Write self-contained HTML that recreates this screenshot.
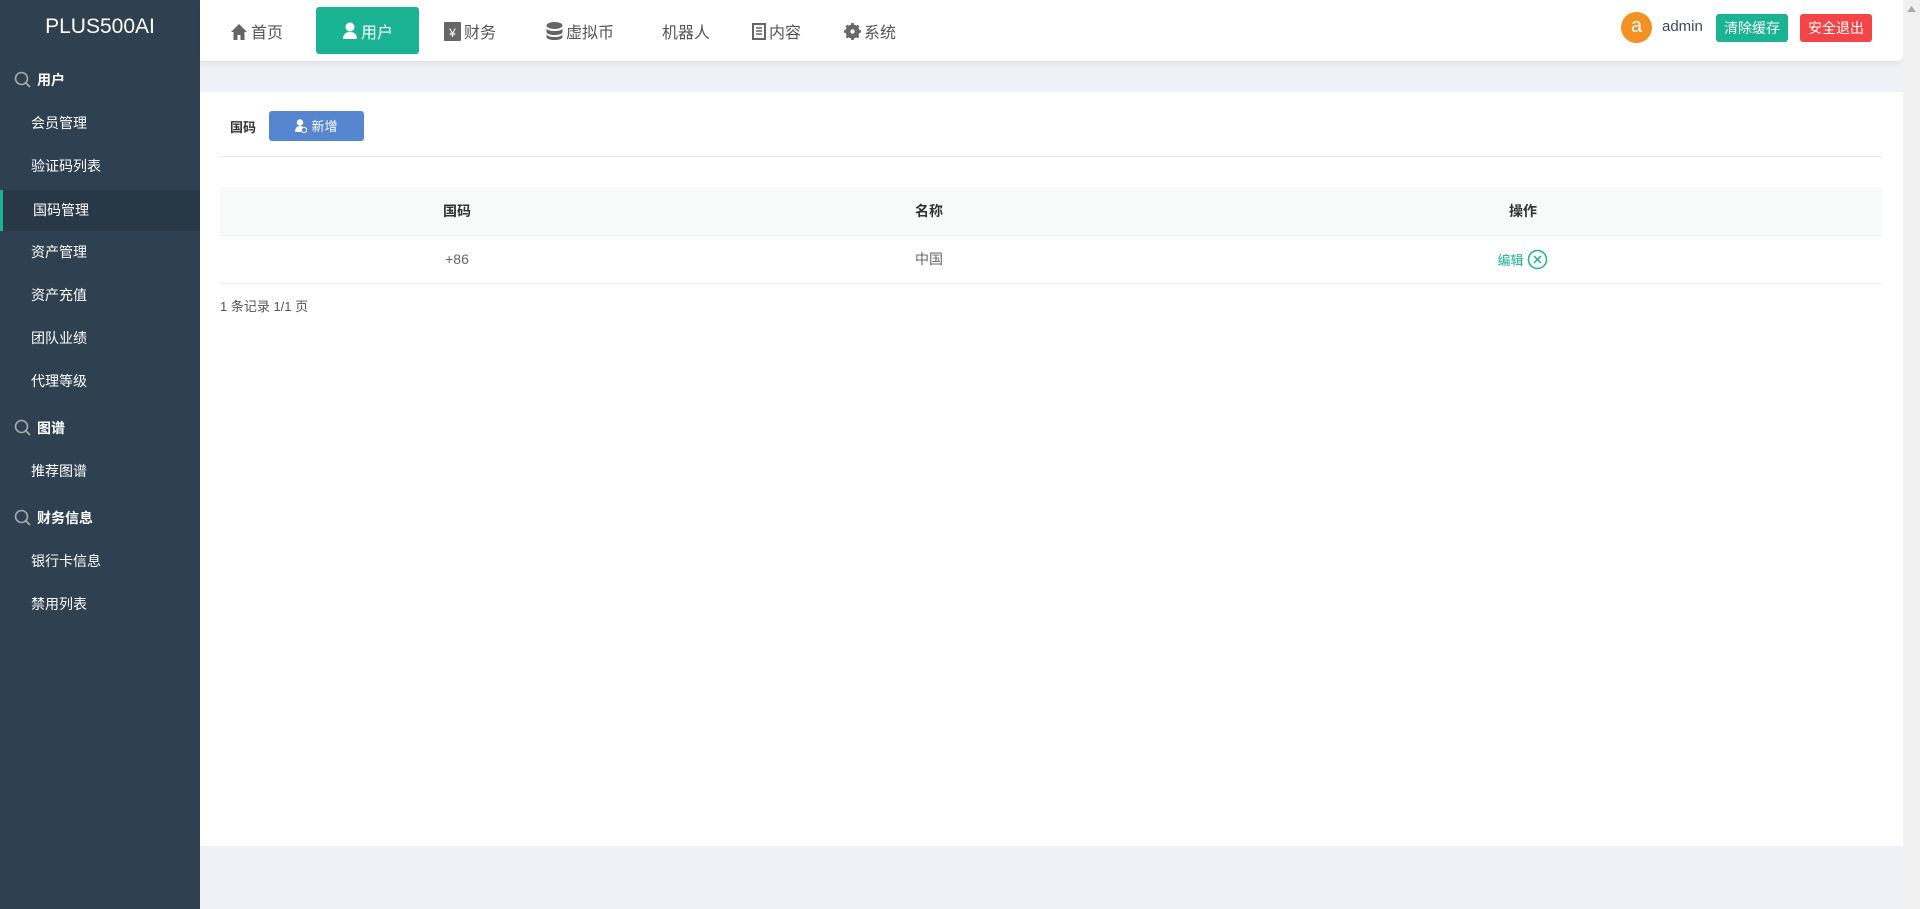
<!DOCTYPE html>
<html><head><meta charset="utf-8"><style>
*{margin:0;padding:0;box-sizing:border-box}
body{width:1920px;height:909px;overflow:hidden;background:#f0f1f6;font-family:"Liberation Sans","Noto Sans CJK SC",sans-serif;position:relative;color:#333}
.side{position:absolute;left:0;top:0;width:200px;height:909px;background:#2f4050}
.logo{position:absolute;top:15px;width:200px;text-align:center;color:#fff;font-size:21px}
.sec{position:absolute;left:14px;color:#fff;font-weight:bold;font-size:14px;display:flex;align-items:center;gap:5px}
.it{position:absolute;left:0;width:200px;height:41px;line-height:41px;padding-left:31px;color:#fff;font-size:14px}
.it.act{background:#293846;border-left:3px solid #1ab394;padding-left:30px}
.top{position:absolute;left:200px;top:0;width:1703px;height:61px;background:#fff;box-shadow:0 2px 6px rgba(0,0,0,.08);border-radius:0 0 6px 0}
.nav{position:absolute;top:19px;font-size:16px;color:#555;display:flex;align-items:center;gap:3px}
.navact{position:absolute;left:116px;top:7px;width:103px;height:47px;background:#1ab394;border-radius:3px;color:#fff;font-size:16px;display:flex;align-items:center;justify-content:center;gap:3px}
.btn{position:absolute;top:14px;height:28px;line-height:28px;color:#fff;font-size:14px;text-align:center;border-radius:3px}
.panel{position:absolute;left:200px;top:92px;width:1703px;height:754px;background:#fff}
.scroll{position:absolute;right:0;top:0;width:17px;height:909px;background:#f0f0f0}
table{position:absolute;left:20px;top:95px;width:1662px;border-collapse:collapse;font-size:14px;table-layout:fixed}
th{height:48px;background:#f8f9f9;font-weight:bold;border-bottom:1px solid #eee;color:#333}
td{height:48px;text-align:center;border-bottom:1px solid #eee;color:#666}
</style></head><body>
<div class="side">
<div class="logo">PLUS500AI</div>
<div class="sec" style="top:70px"><svg width="18" height="18" viewBox="0 0 18 18"><circle cx="7.5" cy="7.5" r="6" fill="none" stroke="#aaa" stroke-width="1.6"/><path d="M12 12l4 4" stroke="#aaa" stroke-width="1.8"/></svg>用户</div>
<div class="it" style="top:103px">会员管理</div>
<div class="it" style="top:146px">验证码列表</div>
<div class="it act" style="top:190px">国码管理</div>
<div class="it" style="top:232px">资产管理</div>
<div class="it" style="top:275px">资产充值</div>
<div class="it" style="top:318px">团队业绩</div>
<div class="it" style="top:361px">代理等级</div>
<div class="sec" style="top:418px"><svg width="18" height="18" viewBox="0 0 18 18"><circle cx="7.5" cy="7.5" r="6" fill="none" stroke="#aaa" stroke-width="1.6"/><path d="M12 12l4 4" stroke="#aaa" stroke-width="1.8"/></svg>图谱</div>
<div class="it" style="top:451px">推荐图谱</div>
<div class="sec" style="top:508px"><svg width="18" height="18" viewBox="0 0 18 18"><circle cx="7.5" cy="7.5" r="6" fill="none" stroke="#aaa" stroke-width="1.6"/><path d="M12 12l4 4" stroke="#aaa" stroke-width="1.8"/></svg>财务信息</div>
<div class="it" style="top:541px">银行卡信息</div>
<div class="it" style="top:584px">禁用列表</div>
</div>
<div class="top">
<div class="nav" style="left:30px"><svg width="18" height="17" viewBox="0 0 18 17"><path d="M9 1L1 9h2.5v8h4v-5h3v5h4V9H17z" fill="#666"/></svg>首页</div>
<div class="navact"><svg width="16" height="17" viewBox="0 0 16 17"><circle cx="8" cy="5" r="4.5" fill="#fff"/><path d="M1 17c0-5 3-7 7-7s7 2 7 7z" fill="#fff"/></svg>用户</div>
<div class="nav" style="left:244px"><svg width="17" height="19" viewBox="0 0 17 19"><rect x="0" y="0" width="17" height="19" rx="1" fill="#666"/><text x="8.5" y="15" font-size="12" fill="#fff" text-anchor="middle" font-family="Liberation Sans">¥</text></svg>财务</div>
<div class="nav" style="left:346px"><svg width="17" height="19" viewBox="0 0 17 19"><ellipse cx="8.5" cy="3.5" rx="8" ry="3.5" fill="#666"/><path d="M.5 6c0 4 16 4 16 0v4c0 4-16 4-16 0zM.5 12c0 4 16 4 16 0v3c0 4-16 4-16 0z" fill="#666"/></svg>虚拟币</div>
<div class="nav" style="left:462px">机器人</div>
<div class="nav" style="left:552px"><svg width="14" height="17" viewBox="0 0 14 17"><rect x="1" y="1" width="12" height="15" fill="none" stroke="#666" stroke-width="2"/><path d="M4 5h6M4 8h6M4 11h6" stroke="#666" stroke-width="1.5"/></svg>内容</div>
<div class="nav" style="left:644px"><svg width="17" height="17" viewBox="0 0 17 17"><circle cx="8.5" cy="8.5" r="5.5" fill="none" stroke="#666" stroke-width="3"/><path d="M8.5 0v17M0 8.5h17M2.5 2.5l12 12M14.5 2.5l-12 12" stroke="#666" stroke-width="2.6"/><circle cx="8.5" cy="8.5" r="2.2" fill="#fff"/></svg>系统</div>
<div style="position:absolute;left:1421px;top:12px;width:31px;height:31px;border-radius:50%;background:#f39223;color:#fff;font-size:20px;text-align:center;line-height:29px">a</div>
<div style="position:absolute;left:1462px;top:18px;font-size:15px;color:#3d4a5a">admin</div>
<div class="btn" style="left:1516px;width:72px;background:#1ab394">清除缓存</div>
<div class="btn" style="left:1600px;width:72px;background:#f34448">安全退出</div>
</div>
<div class="panel">
<div style="position:absolute;left:30px;top:25px;font-size:13px;font-weight:bold">国码</div>
<div style="position:absolute;left:69px;top:19px;width:95px;height:30px;background:#5586cf;border-radius:3px;color:#fff;font-size:13px;display:flex;align-items:center;justify-content:center;gap:4px;line-height:1"><svg width="12" height="14" viewBox="0 0 12 14"><circle cx="5" cy="3.5" r="3.2" fill="#fff"/><path d="M0 13c0-4 2-6 5-6s5 2 5 6z" fill="#fff"/><circle cx="9" cy="11" r="2.6" fill="#5586cf" stroke="#fff" stroke-width="1"/></svg><span>新增</span></div>
<div style="position:absolute;left:20px;top:64px;width:1662px;height:1px;background:#e7eaec"></div>
<table><colgroup><col style="width:474px"><col style="width:470px"><col></colgroup><tr><th>国码</th><th>名称</th><th>操作</th></tr>
<tr><td>+86</td><td>中国</td><td><span style="color:#1ab394;font-size:13px;vertical-align:middle">编辑</span> <svg style="vertical-align:middle" width="21" height="21" viewBox="0 0 21 21"><circle cx="10.5" cy="10.5" r="9" fill="none" stroke="#1ab394" stroke-width="1.5"/><path d="M7 7l7 7M14 7l-7 7" stroke="#1ab394" stroke-width="1.5"/></svg></td></tr></table>
<div style="position:absolute;left:20px;top:204px;font-size:13px;color:#555">1 条记录 1/1 页</div>
</div>
<div class="scroll"><svg style="position:absolute;left:4px;top:6px" width="9" height="6"><path d="M0 6L4.5 0 9 6z" fill="#aaa"/></svg></div>
</body></html>
